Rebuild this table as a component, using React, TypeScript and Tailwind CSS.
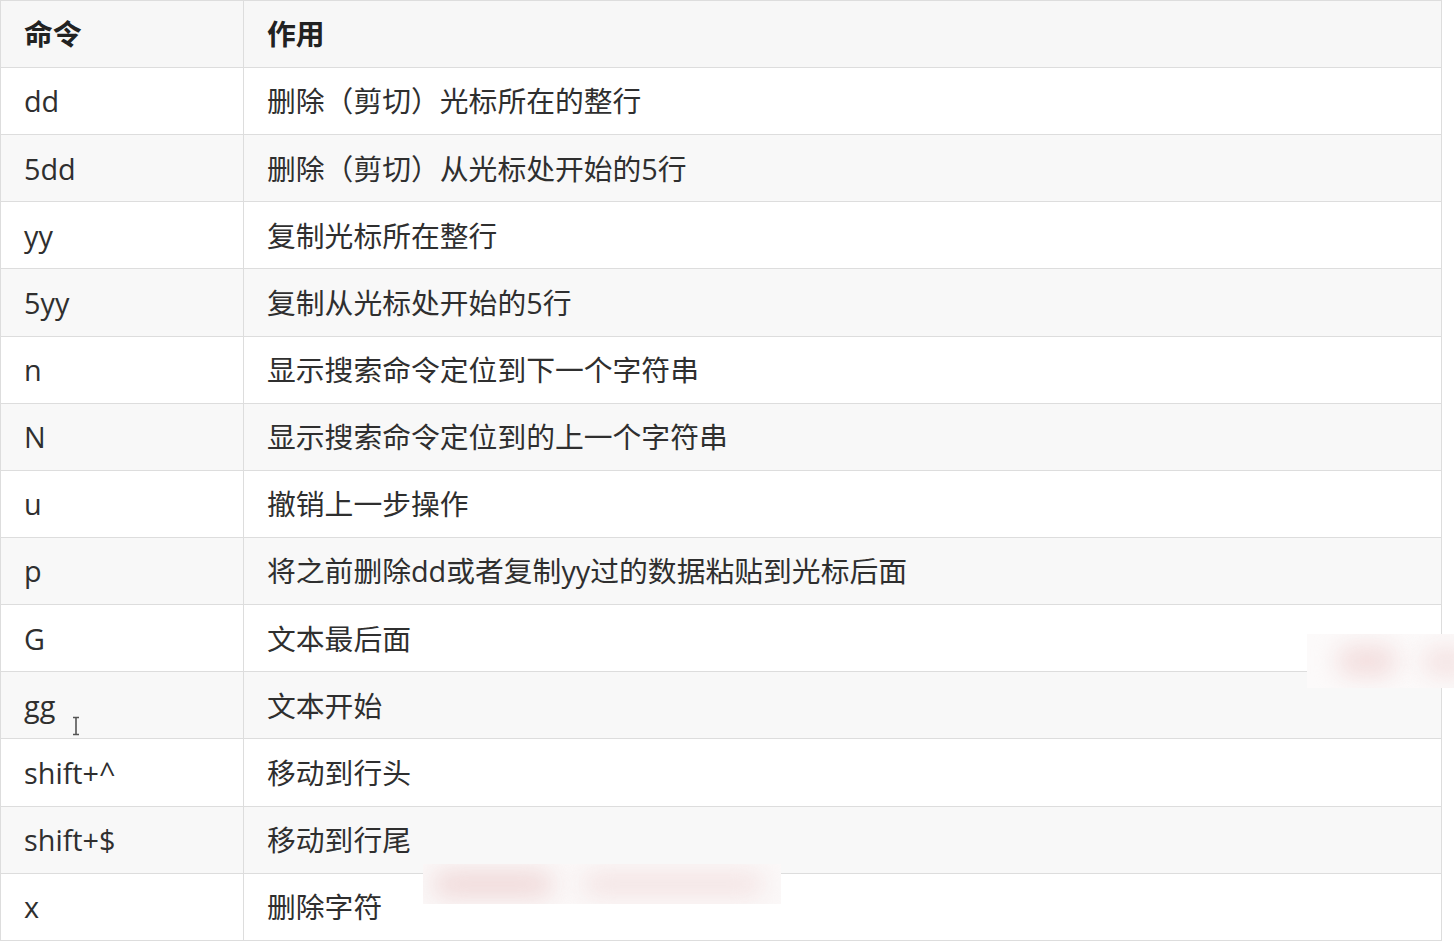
import React from "react";

const rows: [string, string][] = [
  ["dd", "删除（剪切）光标所在的整行"],
  ["5dd", "删除（剪切）从光标处开始的5行"],
  ["yy", "复制光标所在整行"],
  ["5yy", "复制从光标处开始的5行"],
  ["n", "显示搜索命令定位到下一个字符串"],
  ["N", "显示搜索命令定位到的上一个字符串"],
  ["u", "撤销上一步操作"],
  ["p", "将之前删除dd或者复制yy过的数据粘贴到光标后面"],
  ["G", "文本最后面"],
  ["gg", "文本开始"],
  ["shift+^", "移动到行头"],
  ["shift+$", "移动到行尾"],
  ["x", "删除字符"],
];

export default function App() {
  return (
    <div
      className="relative w-[1454px] h-[941px] overflow-hidden bg-white text-[#2f2f2f]"
      style={{ fontFamily: '"Open Sans", "Noto Sans CJK SC", sans-serif' }}
    >
      <div className="w-[1442px] border-l border-r border-t border-[#dddddd]">
        <div className="flex h-[67px] bg-[#f7f7f7] border-b border-[#dddddd] font-bold text-[#222222] text-[28.8px]">
          <div className="w-[243px] shrink-0 flex items-center pl-[23px] border-r border-[#dddddd]">命令</div>
          <div className="flex-1 flex items-center pl-[23px]">作用</div>
        </div>
        {rows.map(([cmd, desc], i) => (
          <div
            key={cmd}
            className={
              "flex h-[67.15px] border-b border-[#dddddd] text-[28.8px] " +
              (i % 2 === 1 ? "bg-[#f8f8f8]" : "bg-white")
            }
          >
            <div className="w-[243px] shrink-0 flex items-center pl-[23px] border-r border-[#dddddd]">{cmd}</div>
            <div className="flex-1 flex items-center pl-[23px]">{desc}</div>
          </div>
        ))}
      </div>

      {/* text cursor */}
      <svg className="absolute left-[71px] top-[716px]" width="10" height="20" viewBox="0 0 10 20">
        <path d="M2 1.5h6M2 18.5h6M5 1.5v17" stroke="#555" strokeWidth="1.6" fill="none" />
      </svg>

      {/* blurred overlays */}
      <div className="absolute left-[423px] top-[864px] w-[358px] h-[40px] bg-[#fbf8f8] overflow-hidden">
        <div className="absolute left-[10px] top-[8px] w-[120px] h-[24px] rounded-full bg-[#efd6d6] blur-md" />
        <div className="absolute left-[160px] top-[10px] w-[180px] h-[20px] rounded-full bg-[#f3e0e0] blur-md" />
      </div>
      <div className="absolute left-[1307px] top-[634px] w-[147px] h-[54px] bg-[#fcfafa] overflow-hidden">
        <div className="absolute left-[30px] top-[12px] w-[60px] h-[30px] rounded-full bg-[#f2dcdc] blur-md" />
        <div className="absolute left-[115px] top-[14px] w-[50px] h-[28px] rounded-full bg-[#f4e2e2] blur-md" />
      </div>
    </div>
  );
}
